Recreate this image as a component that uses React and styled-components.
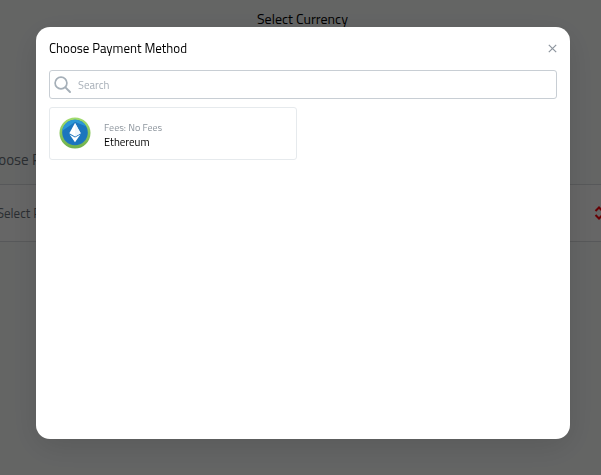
import React from 'react';
import styled, { createGlobalStyle } from 'styled-components';

const GlobalStyle = createGlobalStyle`
  * {
    box-sizing: border-box;
  }

  body {
    margin: 0;
    overflow: hidden;
    background: #fafdfb;
    color: #000;
    font-family: 'Titillium Web', Roboto, 'Noto Sans', sans-serif;
  }

  button,
  input {
    font-family: inherit;
  }
`;

const Page = styled.main`
  margin: 0 -20px;
`;

const PageTitle = styled.h1`
  margin: 0;
  padding: 7px 0 0 4px;
  font-size: 14px;
  font-weight: 400;
  line-height: 24px;
  text-align: center;
`;

const Field = styled.div`
  padding-top: 117px;
`;

const FieldLabel = styled.label`
  display: block;
  padding: 0 2px 12px;
  color: #6b737c;
  font-size: 15px;
  line-height: 24px;
`;

const Picker = styled.button`
  display: flex;
  align-items: center;
  justify-content: space-between;
  width: 100%;
  height: 58px;
  padding: 0 16px;
  border: 1px solid #dadde0;
  background: #fff;
  color: #6b737c;
  font-size: 13px;
`;

const Overlay = styled.div`
  position: fixed;
  inset: 0;
  display: flex;
  padding: 27px 31px 36px 36px;
  background: rgba(0, 0, 0, 0.6);
`;

const Modal = styled.section`
  flex: 1;
  min-width: 0;
  padding: 11px 13px;
  border-radius: 14px;
  background: #fff;
  box-shadow: 0 8px 32px 0 rgba(0, 0, 0, 0.12);
`;

const ModalHeader = styled.header`
  display: flex;
  align-items: center;
  justify-content: space-between;
  height: 20px;
  margin-bottom: 12px;
`;

const ModalTitle = styled.h2`
  margin: 0;
  font-size: 13px;
  font-weight: 400;
  line-height: 20px;
`;

const CloseButton = styled.button`
  display: flex;
  padding: 0;
  border: 0;
  background: none;
  color: #8d959e;
`;

const SearchBox = styled.label`
  display: flex;
  align-items: center;
  gap: 6px;
  height: 29px;
  margin-bottom: 8px;
  padding: 0 4px;
  border: 1px solid #c8ced4;
  border-radius: 3px;
  color: #a5afb8;
`;

const SearchInput = styled.input`
  flex: 1;
  min-width: 0;
  padding: 0;
  border: 0;
  outline: 0;
  background: none;
  font-size: 11px;

  &::placeholder {
    color: #a5adb6;
    opacity: 1;
  }
`;

const Methods = styled.div`
  display: grid;
  grid-template-columns: repeat(2, 1fr);
  gap: 12px;
`;

const MethodCard = styled.button`
  display: flex;
  align-items: center;
  gap: 13px;
  height: 53px;
  padding: 0 9px 2px;
  border: 1px solid #e6eaed;
  border-radius: 3px;
  background: #fff;
  color: #000;
  text-align: left;
`;

const MethodText = styled.span`
  display: flex;
  flex-direction: column;
  padding-top: 6px;
`;

const Fees = styled.span`
  color: #8e969e;
  font-size: 10px;
  line-height: 14px;
`;

const MethodName = styled.span`
  font-size: 11px;
  line-height: 15px;
`;

const SearchIcon = () => (
  <svg width="18" height="18" viewBox="0 0 18 18" fill="none" stroke="currentColor" aria-hidden="true">
    <circle cx="7" cy="7" r="5.9" strokeWidth="1.7" />
    <path d="M11.4 11.4L16 16" strokeWidth="2" strokeLinecap="round" />
  </svg>
);

const CloseIcon = () => (
  <svg width="9" height="9" viewBox="0 0 9 9" stroke="currentColor" strokeWidth="1.2" aria-hidden="true">
    <path d="M0.8 0.8L8.2 8.2M8.2 0.8L0.8 8.2" />
  </svg>
);

const SortIcon = () => (
  <svg width="10" height="14" viewBox="0 0 10 14" fill="none" stroke="#ff0008" strokeWidth="2" aria-hidden="true">
    <path d="M1.5 5L5 1.5L8.5 5M1.5 9L5 12.5L8.5 9" />
  </svg>
);

const EthereumIcon = () => (
  <svg width="32" height="32" viewBox="0 0 32 32" aria-hidden="true">
    <defs>
      <linearGradient id="ethRing" x1="0" y1="0" x2="0" y2="1">
        <stop offset="0" stopColor="#a2dc6e" />
        <stop offset="1" stopColor="#6fb04c" />
      </linearGradient>
      <clipPath id="ethDisc">
        <circle cx="16" cy="15.5" r="12.8" />
      </clipPath>
    </defs>
    <circle cx="16" cy="16" r="15.5" fill="url(#ethRing)" />
    <circle cx="16" cy="15.5" r="12.8" fill="#1b75be" />
    <path d="M0 0H32V11L16 5L3 14Z" fill="#2b97d6" clipPath="url(#ethDisc)" />
    <path d="M16 6L10.3 16.2L16 19.4L21.7 16.2Z" fill="#fff" />
    <path d="M16 6V19.4L21.7 16.2Z" fill="#eff6fc" />
    <path d="M10.6 17.6L16 25.2L21.4 17.6L16 20.6Z" fill="#fff" />
  </svg>
);

const methods = [{ id: 'eth', name: 'Ethereum', fees: 'No Fees', Icon: EthereumIcon }];

class App extends React.Component {
  constructor(props) {
    super(props);
    this.state = {
      search: '',
      open: true,
    };

    this.handleSearch = this.handleSearch.bind(this);
    this.openModal = this.openModal.bind(this);
    this.closeModal = this.closeModal.bind(this);
  }

  handleSearch(event) {
    this.setState({ search: event.target.value });
  }

  openModal() {
    this.setState({ open: true });
  }

  closeModal() {
    this.setState({ open: false });
  }

  render() {
    const { search, open } = this.state;
    const found = methods.filter(({ name }) => name.toLowerCase().includes(search.toLowerCase()));

    return (
      <>
        <GlobalStyle />
        <Page>
          <PageTitle>Select Currency</PageTitle>
          <Field>
            <FieldLabel htmlFor="paymentMethod">Choose Payment Method</FieldLabel>
            <Picker id="paymentMethod" type="button" onClick={this.openModal}>
              Select Payment Method
              <SortIcon />
            </Picker>
          </Field>
        </Page>
        {open && (
          <Overlay>
            <Modal role="dialog" aria-modal="true" aria-labelledby="modalTitle">
              <ModalHeader>
                <ModalTitle id="modalTitle">Choose Payment Method</ModalTitle>
                <CloseButton type="button" aria-label="Close" onClick={this.closeModal}>
                  <CloseIcon />
                </CloseButton>
              </ModalHeader>
              <SearchBox>
                <SearchIcon />
                <SearchInput
                  type="text"
                  placeholder="Search"
                  aria-label="Search"
                  value={search}
                  onChange={this.handleSearch}
                />
              </SearchBox>
              <Methods>
                {found.map(({ id, name, fees, Icon }) => (
                  <MethodCard key={id} type="button" onClick={this.closeModal}>
                    <Icon />
                    <MethodText>
                      <Fees>Fees: {fees}</Fees>
                      <MethodName>{name}</MethodName>
                    </MethodText>
                  </MethodCard>
                ))}
              </Methods>
            </Modal>
          </Overlay>
        )}
      </>
    );
  }
}

export default App;
